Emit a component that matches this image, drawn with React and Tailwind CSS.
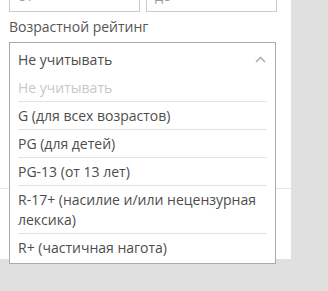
import React from 'react';

const options = [
    'G (для всех возрастов)',
    'PG (для детей)',
    'PG-13 (от 13 лет)',
    'R-17+ (насилие и/или нецензурная лексика)',
    'R+ (частичная нагота)',
];

export default function App() {
    return (
        <div className="w-[328px] h-[291px] bg-[#e0e0e0] overflow-hidden font-['Open_Sans',sans-serif] text-[14px] text-[#4d4d4d]">
            <div className="flex">
                <div className="w-[291px] h-[259px] bg-white relative">
                    {/* Range inputs (scrolled off the top) */}
                    <div className="flex gap-[6px] pl-[9px] -mt-[22px]">
                        <div className="w-[131px] h-[34px] border border-[#ccc] px-[8px] flex items-center text-[#999]">от</div>
                        <div className="w-[131px] h-[34px] border border-[#ccc] px-[8px] flex items-center text-[#999]">до</div>
                    </div>

                    <div className="pl-[9px] mt-[5px] leading-[20px] text-[#555]">Возрастной рейтинг</div>

                    {/* divider line under the dropdown */}
                    <div className="absolute left-0 right-0 top-[188px] h-px bg-[#e6e6e6]"></div>

                    {/* Open select */}
                    <div className="relative z-10 ml-[9px] mt-[5px] w-[267px] border border-[#aaa] bg-white">
                        <div className="flex items-center justify-between pl-[8px] pr-[9px] h-[32px]">
                            <span>Не учитывать</span>
                            <svg width="11" height="7" viewBox="0 0 11 7" fill="none" stroke="#aaa" strokeWidth="1.5">
                                <path d="M1 6 L5.5 1.5 L10 6" />
                            </svg>
                        </div>
                        <div className="px-[8px]">
                            <div className="leading-[20px] pt-[3px] pb-[3px] border-b border-[#e3e3e3] text-[#c8c8c8]">Не учитывать</div>
                            {options.map((o, i) => (
                                <div
                                    key={o}
                                    className={`leading-[20px] pt-[4px] ${i < options.length - 1 ? 'pb-[3px] border-b border-[#e3e3e3]' : 'pb-[5px]'}`}
                                >
                                    {o}
                                </div>
                            ))}
                        </div>
                    </div>
                </div>
            </div>
        </div>
    );
}
